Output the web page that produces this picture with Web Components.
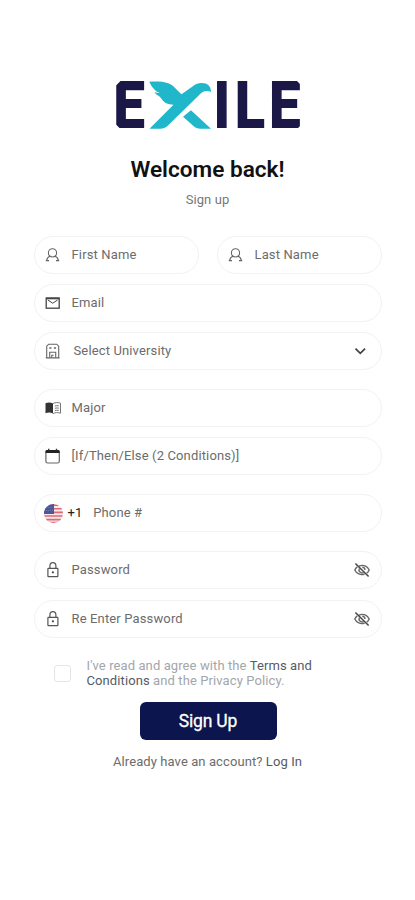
<!DOCTYPE html>
<html lang="en">
<head>
<meta charset="utf-8">
<meta name="viewport" content="width=device-width, initial-scale=1">
<title>Exile - Sign up</title>
<style>
    html, body { margin: 0; background: #fff; }
    body { font-family: Roboto, "Liberation Sans", sans-serif; }
</style>
</head>
<body>
<signup-page></signup-page>

<script>
const ICONS = {
    user: `<g fill="none" stroke="#666" stroke-width="1.1"><circle cx="7.500" cy="5.900" r="4.100"/><path d="M1.500 13.600c.5-2.300 1.800-3.800 3.900-4.500M13.500 13.600c-.5-2.300-1.800-3.800-3.900-4.500M.8 13.600h3.200M11 13.600h3.200"/></g>`,
    mail: `<g fill="none" stroke="#444" stroke-width="1.3"><rect x="1.2" y="3" width="13" height="10.2"/><path d="M1.2 3.500h13" stroke-width="1.6"/><path d="M2.800 5l4.900 3.200L12.600 5" stroke-width="1"/></g>`,
    building: `<g fill="none" stroke="#666" stroke-width="1.100"><path d="M1.700 14.800V3.200L3.700 1.200h8l2 2v11.600M.8 14.900h13.800"/><path d="M4.700 14.800V9.200h6v5.600M6.800 14.800v-2.600h1.900"/><path d="M4.300 5h2.200M8.900 5h2.200" stroke-width="1.300"/></g>`,
    book: `<path d="M.5 3.200C3 2.200 5.8 2.300 8 3.600v10C5.800 12.300 3 12.300.5 13.200z" fill="#333"/><path d="M8 3.600c2.200-1.300 5-1.300 7.500-.4v10c-2.500-.9-5.300-.9-7.500.4M9.800 6c1.200-.4 2.600-.4 4-.2M9.800 8.300c1.200-.4 2.600-.4 4-.2M9.800 10.600c1.200-.4 2.600-.4 4-.2" fill="none" stroke="#777" stroke-width="1"/>`,
    calendar: `<rect x=".9" y="2.500" width="13.400" height="12.500" rx="1.800" fill="none" stroke="#666" stroke-width="1.200"/><path d="M.6 4.900V3.300q0-1.300 1.500-1.300h11q1.500 0 1.500 1.300v1.600z" fill="#222"/><path d="M3.700 .8v2M11.500 .8v2" stroke="#333" stroke-width="1.400"/>`,
    lock: `<g fill="none" stroke="#555" stroke-width="1.200"><rect x="2.900" y="6.300" width="10" height="8.300" rx=".6"/><path d="M4.900 6.300V3.900a3 3.200 0 0 1 6 0v2.400"/></g><circle cx="7.900" cy="10.300" r="1.100" fill="#444"/>`,
    chevron: `<path d="M3.500 5.700L8.300 10.300l4.800-4.600" fill="none" stroke="#444" stroke-width="1.800"/>`,
    eye: `<g fill="none" stroke="#666" stroke-width="1.400"><path d="M5 4.200C9.500 2 13.500 4.500 15.200 8c-.6 1.300-1.400 2.400-2.500 3.200M3.300 4.900C2.100 5.800 1.300 6.900.8 8c1.700 3.600 5.700 5.600 9.800 4.200"/><path d="M5.400 6.500a3 3 0 0 0 4.200 4M8.300 5.200A2.900 2.900 0 0 1 11 8"/><path d="M1.400 1.500l13.200 13" stroke="#444" stroke-width="1.500"/></g>`,
    flag: `<defs><clipPath id="c"><circle cx="8" cy="8" r="8"/></clipPath></defs><g clip-path="url(#c)"><path fill="#f5e9ec" d="M0 0h16v16H0z"/><path d="M0 .9h16M0 4h16M0 7h16M0 10.100h16M0 13.100h16M0 15.700h16" stroke="#dc6b77" stroke-width="1.400"/><path fill="#4c5797" d="M0 0h8.400v8.500H0z"/><path d="M2 3h5M1.500 5.500h6" stroke="#8089bb" stroke-width=".7" stroke-dasharray=".8 1"/></g>`
};

class UiIcon extends HTMLElement {
    constructor() {
        super();
        this.attachShadow({ mode: 'open' });
    }

    connectedCallback() {
        this.shadowRoot.innerHTML = `
            <style>
                :host { display: block; flex: none; width: 16px; height: 16px; }
                svg { display: block; width: 100%; height: 100%; }
            </style>
            <svg viewBox="0 0 16 16" aria-hidden="true">${ICONS[this.getAttribute('name')] || ''}</svg>
        `;
    }
}

class ExileLogo extends HTMLElement {
    constructor() {
        super();
        this.attachShadow({ mode: 'open' });
        this.shadowRoot.innerHTML = `
            <style>
                :host { display: block; width: 186px; height: 48px; }
                svg { display: block; overflow: visible; }
                text { font: 700 63.5px Roboto, sans-serif; fill: #1b1848; stroke: #1b1848; stroke-width: 1.8px; }
            </style>
            <svg width="186" height="48" viewBox="0 0 186 48">
                <text transform="translate(-1.500 46.300) scale(.87 1)">E</text>
                <text transform="translate(98.800 46.300) scale(.87 1)">I</text>
                <text transform="translate(119.900 46.300) scale(.86 1)">L</text>
                <text transform="translate(154.300 46.300) scale(.87 1)">E</text>
                <!-- clipped corners of the outer letters -->
                <path fill="#fff" d="M0 0h5.500L0 5.500zM0 48h5.500L0 42.500zM187 0h-5L187 5zM187 48h-5L187 43z"/>
                <path fill="#20b7cb" d="M34.300.7c7.500-.3 14-.2 19 1.600 5.800 2.200 8.700 7.200 13.200 11L77.500 5.500c3.400-2.800 6.300-3.600 9.500-3.500 5.300.1 9 3 9 9.100-2-1.300-4.800-1.400-7-.7-1.900.6-3.300 1.900-4.800 3.500L54 43.500c-2.900 3.100-5.200 4.200-9 4.200H34.500l24-24c-6 0-9.500-2.100-11.500-5.200-1.300-2-2.500-3.200-4.500-4.300-1.500-.8-2.400-1.800-2.700-3.200 1.500.7 3.200 1.100 5 1C40.500 10.500 36.500 6.100 34.300.7z"/>
                <path fill="#20b7cb" d="M68 35.700l8-6.500 20 18.500H85.500c-3 0-5-.8-7-2.700z"/>
            </svg>
        `;
    }
}

class FormField extends HTMLElement {
    constructor() {
        super();
        this.attachShadow({ mode: 'open' });
        this.shadowRoot.innerHTML = `
            <style>
                :host {
                    display: flex;
                    align-items: center;
                    box-sizing: border-box;
                    height: 38px;
                    padding: 0 11px 0 10px;
                    border: 1.500px solid #f2f2f2;
                    border-radius: 19px;
                    background: #fff;
                    color: #6c6c6c;
                    font-size: 13px;
                    line-height: 16px;
                    letter-spacing: .14px;
                }
                .label { flex: 1; margin-left: var(--label-gap, 11px); white-space: nowrap; }
            </style>
            <slot name="start"></slot>
            <span class="label"><slot></slot></span>
            <slot name="end"></slot>
        `;
    }
}

class CheckRow extends HTMLElement {
    constructor() {
        super();
        this.attachShadow({ mode: 'open' });
        this.shadowRoot.innerHTML = `
            <style>
                :host { display: flex; align-items: center; gap: 16px; }
                .box {
                    box-sizing: border-box;
                    flex: none;
                    width: 17px;
                    height: 17px;
                    border: 1.500px solid #e3e6e7;
                    border-radius: 3px;
                }
                .text { color: #a3a6ab; font-size: 13px; line-height: 15px; letter-spacing: .1px; white-space: nowrap; }
            </style>
            <span class="box"></span>
            <span class="text"><slot></slot></span>
        `;
    }
}

class PrimaryButton extends HTMLElement {
    constructor() {
        super();
        this.attachShadow({ mode: 'open' });
        this.shadowRoot.innerHTML = `
            <style>
                :host { display: block; width: 137px; height: 38px; }
                button {
                    width: 100%;
                    height: 100%;
                    padding: 0;
                    border: 0;
                    border-radius: 6px;
                    background: #0d154e;
                    color: #fff;
                    font: 400 17.500px/37px Roboto, sans-serif;
                    letter-spacing: -.2px;
                    -webkit-text-stroke: .3px #fff;
                    cursor: pointer;
                }
            </style>
            <button type="button"><slot></slot></button>
        `;
    }
}

class SignupPage extends HTMLElement {
    constructor() {
        super();
        this.attachShadow({ mode: 'open' });
        this.shadowRoot.innerHTML = `
            <style>
                :host {
                    display: flex;
                    flex-direction: column;
                    align-items: center;
                    box-sizing: border-box;
                    width: 415px;
                    height: 900px;
                    padding-top: 81px;
                    background: #fff;
                }
                h1 { margin: 27px 0 0; font-size: 22.600px; line-height: 28px; font-weight: 600; color: #111; }
                .sub { margin-top: 8px; font-size: 13px; line-height: 16px; letter-spacing: .1px; color: #777; }
                form { display: flex; flex-direction: column; width: 348px; margin-top: 28px; }
                .names { display: grid; grid-template-columns: 1fr 1fr; gap: 18px; }
                .s { margin-top: 10px; }
                .l { margin-top: 19px; }
                .code { margin-left: 5px; color: #222; font-weight: 400; letter-spacing: 0; }
                check-row { margin: 20px 0 0 20px; }
                check-row b { font-weight: 400; color: #555b66; }
                primary-button { margin: 14px 0 0 1px; }
                .login { margin-top: 14px; font-size: 13px; line-height: 16px; letter-spacing: .09px; color: #6c6c6c; }
                .login a { color: #555b66; }
            </style>
            <exile-logo></exile-logo>
            <h1>Welcome back!</h1>
            <div class="sub">Sign up</div>
            <form>
                <div class="names">
                    <form-field><ui-icon slot="start" name="user"></ui-icon>First Name</form-field>
                    <form-field><ui-icon slot="start" name="user"></ui-icon>Last Name</form-field>
                </div>
                <form-field class="s"><ui-icon slot="start" name="mail"></ui-icon>Email</form-field>
                <form-field class="s" style="--label-gap: 13px">
                    <ui-icon slot="start" name="building"></ui-icon>Select University<ui-icon slot="end" name="chevron" style="margin-right: 2px"></ui-icon>
                </form-field>
                <form-field class="l"><ui-icon slot="start" name="book"></ui-icon>Major</form-field>
                <form-field class="s"><ui-icon slot="start" name="calendar"></ui-icon>[If/Then/Else (2 Conditions)]</form-field>
                <form-field class="l" style="padding-left: 9px">
                    <ui-icon slot="start" name="flag" style="width: 19px; height: 19px"></ui-icon>
                    <span class="code" slot="start">+1</span>Phone #
                </form-field>
                <form-field class="l"><ui-icon slot="start" name="lock"></ui-icon>Password<ui-icon slot="end" name="eye"></ui-icon></form-field>
                <form-field class="s" style="margin-top: 11px"><ui-icon slot="start" name="lock"></ui-icon>Re Enter Password<ui-icon slot="end" name="eye"></ui-icon></form-field>
                <check-row>I've read and agree with the <b>Terms and<br>Conditions</b> and the Privacy Policy.</check-row>
            </form>
            <primary-button>Sign Up</primary-button>
            <div class="login">Already have an account? <a>Log In</a></div>
        `;
    }
}

customElements.define('ui-icon', UiIcon);
customElements.define('exile-logo', ExileLogo);
customElements.define('form-field', FormField);
customElements.define('check-row', CheckRow);
customElements.define('primary-button', PrimaryButton);
customElements.define('signup-page', SignupPage);
</script>
</body>
</html>
